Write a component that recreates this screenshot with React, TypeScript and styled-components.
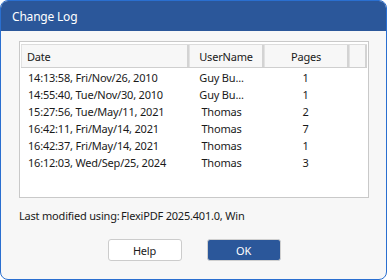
import React from 'react';
import styled, { createGlobalStyle } from 'styled-components';

const GlobalStyle = createGlobalStyle`
    html, body {
        margin: 0;
        padding: 0;
        background: #ffffff;
    }
    * {
        box-sizing: border-box;
    }
`;

type LogEntry = {
    date: string;
    user: string;
    pages: number;
};

const entries: LogEntry[] = [
    { date: '14:13:58, Fri/Nov/26, 2010', user: 'Guy Bu...', pages: 1 },
    { date: '14:55:40, Tue/Nov/30, 2010', user: 'Guy Bu...', pages: 1 },
    { date: '15:27:56, Tue/May/11, 2021', user: 'Thomas', pages: 2 },
    { date: '16:42:11, Fri/May/14, 2021', user: 'Thomas', pages: 7 },
    { date: '16:42:37, Fri/May/14, 2021', user: 'Thomas', pages: 1 },
    { date: '16:12:03, Wed/Sep/25, 2024', user: 'Thomas', pages: 3 },
];

const FONT = `"Noto Sans", "Liberation Sans", sans-serif`;

const Window = styled.div`
    width: 387px;
    height: 280px;
    display: flex;
    flex-direction: column;
    border: 1px solid #2a6fd0;
    border-radius: 8px;
    overflow: hidden;
    background: #f7f7f7;
    font-family: ${FONT};
    font-size: 11px;
    letter-spacing: -0.2px;
    color: #1a1a1a;
`;

const TitleBar = styled.div`
    height: 30px;
    flex: none;
    display: flex;
    align-items: center;
    padding-left: 11px;
    background: #2b579a;
    color: #ffffff;
    font-size: 12px;
`;

const Body = styled.div`
    flex: 1;
    display: flex;
    flex-direction: column;
    padding: 10px 17px 0 18px;
`;

const ListBox = styled.div`
    height: 157px;
    border: 1px solid #c9c9c9;
    background: #ffffff;
    padding: 2px 1px 0 1px;
    display: flex;
    flex-direction: column;
`;

const Header = styled.div`
    display: flex;
    height: 24px;
    flex: none;
    background: #f7f7f7;
    border-top: 1px solid #dcdcdc;
    border-bottom: 1px solid #cfcfcf;
`;

const HeaderCell = styled.div<{ $width: number; $align?: 'left' | 'center' }>`
    width: ${({ $width }) => $width}px;
    flex: none;
    display: flex;
    align-items: center;
    justify-content: ${({ $align }) => ($align === 'center' ? 'center' : 'flex-start')};
    padding-left: ${({ $align }) => ($align === 'center' ? 0 : 5)}px;
    border-right: 2px solid #d3d3d3;
    border-left: 1px solid #e2e2e2;
`;

const Rows = styled.div`
    padding-top: 1px;
`;

const Row = styled.div`
    display: flex;
    height: 17px;
    align-items: center;
`;

const Cell = styled.div<{ $width: number; $align?: 'left' | 'center'; $shift?: number }>`
    width: ${({ $width }) => $width}px;
    flex: none;
    white-space: nowrap;
    text-align: ${({ $align }) => ($align === 'center' ? 'center' : 'left')};
    padding-left: ${({ $align }) => ($align === 'center' ? 0 : 7)}px;
    padding-right: ${({ $shift }) => $shift ?? 0}px;
`;

const Info = styled.div`
    display: flex;
    margin-top: 9px;
    height: 17px;
    align-items: center;
    white-space: nowrap;
`;

const InfoLabel = styled.span`
    width: 102px;
    flex: none;
`;

const Buttons = styled.div`
    display: flex;
    justify-content: center;
    gap: 25px;
    margin-top: 15px;
`;

const Button = styled.button<{ $primary?: boolean }>`
    width: 74px;
    height: 22px;
    padding: 0;
    font-family: ${FONT};
    font-size: 11px;
    letter-spacing: -0.2px;
    border-radius: 3px;
    border: 1px solid ${({ $primary }) => ($primary ? '#d0d0d0' : '#cccccc')};
    background: ${({ $primary }) => ($primary ? '#2b579a' : '#ffffff')};
    color: ${({ $primary }) => ($primary ? '#ffffff' : '#1a1a1a')};
    box-shadow: ${({ $primary }) => ($primary ? 'inset 0 0 0 1px #2b579a' : 'none')};
`;

export default function App() {
    return (
        <>
            <GlobalStyle />
            <Window>
                <TitleBar>Change Log</TitleBar>
                <Body>
                    <ListBox>
                        <Header>
                            <HeaderCell $width={168}>Date</HeaderCell>
                            <HeaderCell $width={75} $align="center">
                                UserName
                            </HeaderCell>
                            <HeaderCell $width={85} $align="center">
                                Pages
                            </HeaderCell>
                            <HeaderCell $width={18} />
                        </Header>
                        <Rows>
                            {entries.map((entry) => (
                                <Row key={entry.date}>
                                    <Cell $width={168}>{entry.date}</Cell>
                                    <Cell $width={75} $align="center" $shift={10}>
                                        {entry.user}
                                    </Cell>
                                    <Cell $width={85} $align="center" $shift={2}>
                                        {entry.pages}
                                    </Cell>
                                </Row>
                            ))}
                        </Rows>
                    </ListBox>
                    <Info>
                        <InfoLabel>Last modified using:</InfoLabel>
                        <span>FlexiPDF 2025.401.0, Win</span>
                    </Info>
                    <Buttons>
                        <Button>Help</Button>
                        <Button $primary>OK</Button>
                    </Buttons>
                </Body>
            </Window>
        </>
    );
}
